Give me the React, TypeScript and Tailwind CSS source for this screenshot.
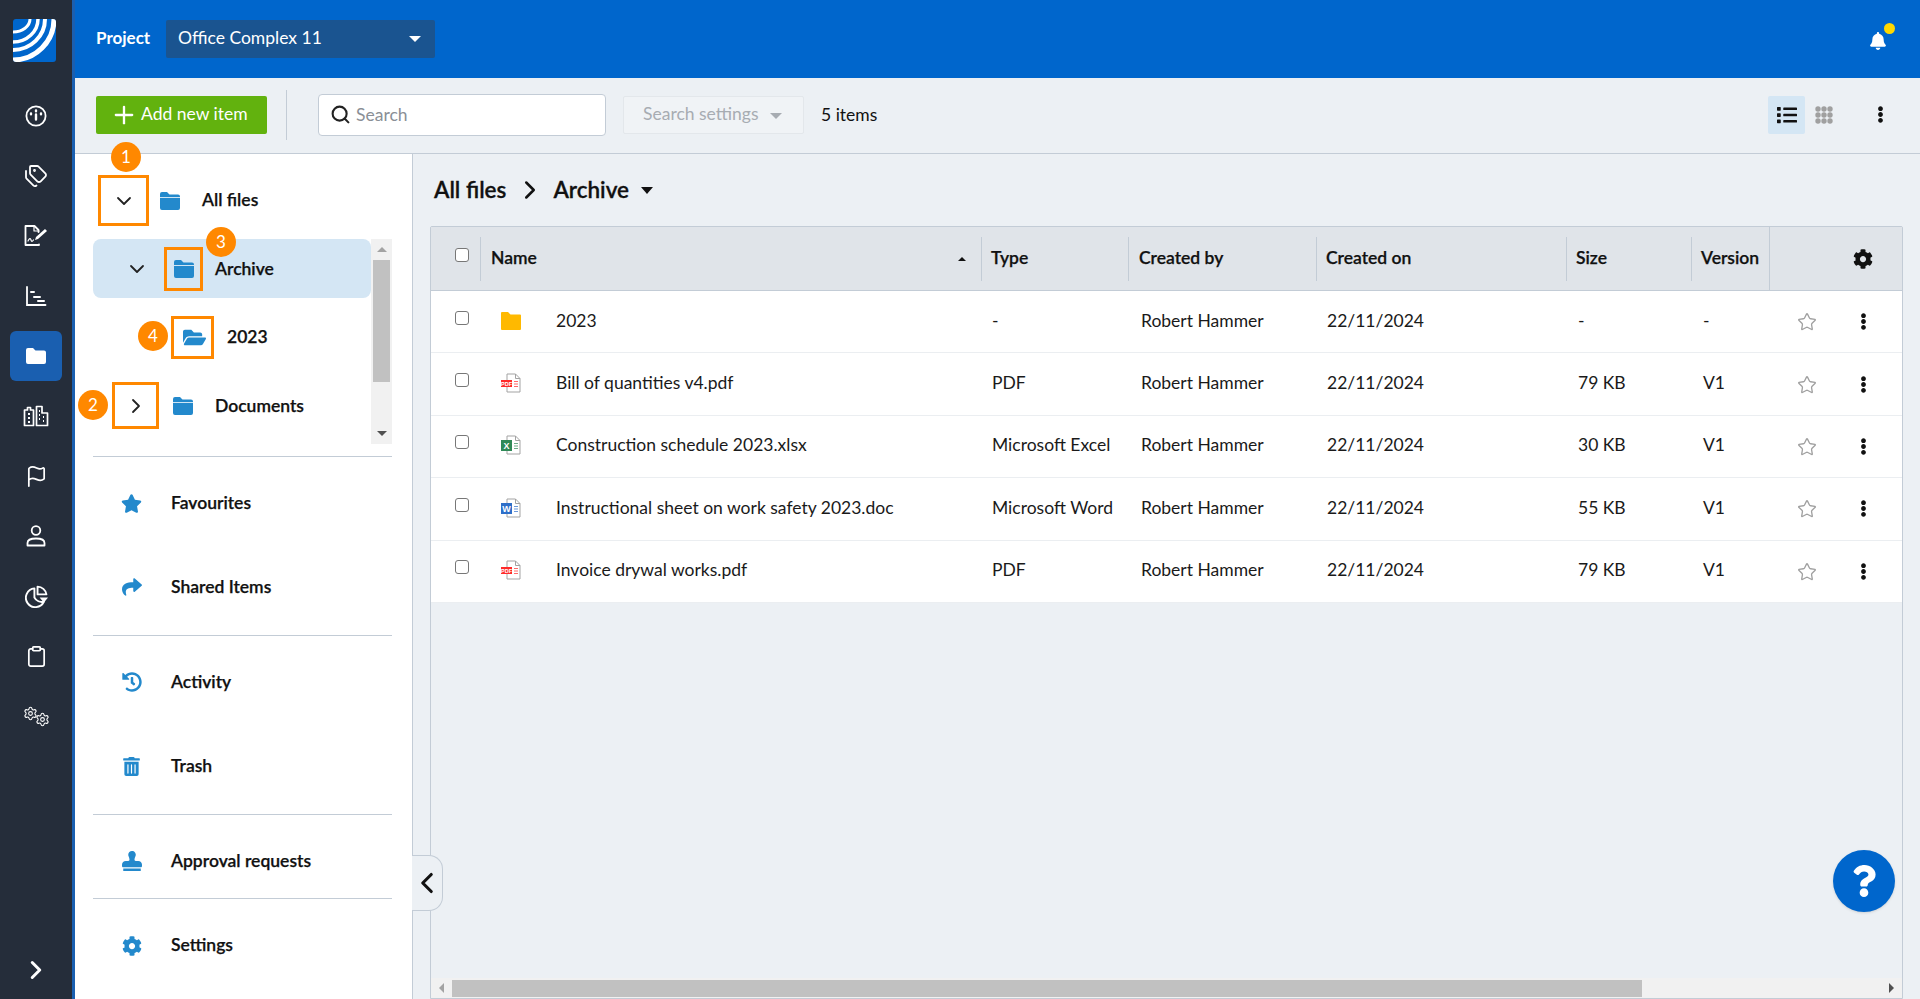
import { ChevronDown, ChevronLeft, ChevronRight, Clipboard, Flag, Plus, Search, Settings, Star, Tags } from 'lucide-react';
import { FaBell, FaCog, FaEllipsisV, FaFolderOpen, FaHistory, FaList, FaQuestion, FaShare, FaStamp, FaStar, FaTrashAlt } from 'react-icons/fa';
import type { ReactNode } from 'react';

const files = [
  { name: '2023', icon: 'folder', type: '-', size: '-', version: '-' },
  { name: 'Bill of quantities v4.pdf', icon: 'pdf', type: 'PDF', size: '79 KB', version: 'V1' },
  { name: 'Construction schedule 2023.xlsx', icon: 'xls', type: 'Microsoft Excel', size: '30 KB', version: 'V1' },
  { name: 'Instructional sheet on work safety 2023.doc', icon: 'doc', type: 'Microsoft Word', size: '55 KB', version: 'V1' },
  { name: 'Invoice drywal works.pdf', icon: 'pdf', type: 'PDF', size: '79 KB', version: 'V1' },
];

const gridCols = 'grid grid-cols-[50px_501px_147px_188px_250px_125px_78px_132px]';
const strong = 'text-[17.500px] font-semibold text-[#111] [-webkit-text-stroke:0.25px_#111]';

function Logo() {
  return (
    <svg viewBox="0 0 43 43" className="w-[43px] h-[43px]">
      <defs>
        <clipPath id="logo-clip">
          <rect width="43" height="43" rx="3" />
        </clipPath>
      </defs>
      <g clipPath="url(#logo-clip)" fill="none" stroke="#fff">
        <rect width="43" height="43" fill="#0066cc" stroke="none" />
        <ellipse cx="0" cy="0" rx="41" ry="41" strokeWidth="5" />
        <ellipse cx="0" cy="0" rx="32" ry="31" strokeWidth="4" />
        <ellipse cx="0" cy="0" rx="25" ry="23" strokeWidth="3.5" />
        <ellipse cx="0" cy="0" rx="17" ry="13" strokeWidth="3" />
      </g>
    </svg>
  );
}

function Gauge() {
  return (
    <svg viewBox="0 0 22 22" className="w-[22px] h-[22px]" fill="none" stroke="#fff" strokeWidth="1.8" strokeLinecap="round">
      <circle cx="11" cy="11" r="9.6" />
      <path d="M11 5.500v.8M6 8.500v.8M16 8.500v.8M11 9.500v5" strokeWidth="2.4" />
    </svg>
  );
}

function Signature() {
  return (
    <svg viewBox="0 0 24 22" className="w-[24px] h-[22px]" fill="none" stroke="#fff" strokeWidth="1.8" strokeLinejoin="round" strokeLinecap="round">
      <path d="M15 19.500v.5H1.500V1h9l4 4v2" />
      <path d="M10 1v5h5" strokeWidth="1.200" />
      <path d="M4 16c1.500-3 2.500-3 3-1s1.500 1.500 2.500 0" strokeWidth="1.200" />
      <path d="M11 15l1-3 9-8 2 2-9 8z" fill="#fff" stroke="none" />
    </svg>
  );
}

function Gantt() {
  return (
    <svg viewBox="0 0 22 22" className="w-[22px] h-[22px]" fill="none" stroke="#fff" strokeWidth="1.800" strokeLinecap="round">
      <path d="M2 2v18h18.500" />
      <path d="M6 7h3M9 12h6M13 16h6" strokeWidth="2" />
    </svg>
  );
}

function Buildings() {
  return (
    <svg viewBox="0 0 26 22" className="w-[26px] h-[22px]" fill="none" stroke="#fff" strokeWidth="1.700" strokeLinejoin="round">
      <path d="M1.500 20.500V5h3V2.500h3V5h3v15.500zM13.500 20.500V1.500H19V8h5.500v12.500z" />
      <path d="M5 9h2M5 13h2M5 17h2M16 6h1M16 10h1M16 14h1M20 12h1M20 16h1" strokeWidth="2" />
    </svg>
  );
}

function Pie() {
  return (
    <svg viewBox="0 0 22 22" className="w-[23px] h-[23px]" fill="none" stroke="#fff" strokeWidth="1.800" strokeLinejoin="round">
      <path d="M9 3.200a9 9 0 1 0 9 12.800a8 8 0 0 1-9-4z" />
      <path d="M12 1.500a9 9 0 0 1 8.500 7.500H12z" />
      <path d="M14 12h8l-4 5z" fill="#fff" stroke="none" />
    </svg>
  );
}

function Person() {
  return (
    <svg viewBox="0 0 20 22" className="w-[20px] h-[22px]" fill="none" stroke="#fff" strokeWidth="1.800" strokeLinejoin="round">
      <circle cx="10" cy="5.500" r="4.300" />
      <path d="M1.500 20.500v-2.500c0-2.500 3-4.500 8.500-4.500s8.500 2 8.500 4.500v2.500z" />
    </svg>
  );
}

function Cogs() {
  return (
    <div className="relative w-[27px] h-[21px] text-white">
      <Settings size={15} strokeWidth={1.7} className="absolute left-0 top-0" />
      <Settings size={15} strokeWidth={1.7} className="absolute right-0 bottom-0" />
    </div>
  );
}

function Rail() {
  const item = 'h-[60px] flex items-center justify-center';
  return (
    <aside className="w-[75px] shrink-0 bg-[#252d3a] border-r-[3px] border-[#1a5fb0] flex flex-col">
      <div className="h-[86px] pt-[19px] pl-[13px]">
        <Logo />
      </div>
      <div className={item}><Gauge /></div>
      <div className={item}><Tags size={24} strokeWidth={1.8} className="text-white" /></div>
      <div className={item}><Signature /></div>
      <div className={item}><Gantt /></div>
      <div className={item}>
        <div className="w-[52px] h-[50px] rounded-[6px] bg-[#1a5fb0] flex items-center justify-center">
          <svg viewBox="0 0 20 18" className="w-[20px] h-[18px]" fill="#fff">
            <path d="M0 3a2 2 0 0 1 2-2h5l2.500 2.500H18a2 2 0 0 1 2 2V15a2 2 0 0 1-2 2H2a2 2 0 0 1-2-2z" />
          </svg>
        </div>
      </div>
      <div className={item}><Buildings /></div>
      <div className={item}><Flag size={23} strokeWidth={1.8} className="text-white" /></div>
      <div className={item}><Person /></div>
      <div className={item}><Pie /></div>
      <div className={item}><Clipboard size={23} strokeWidth={1.8} className="text-white" /></div>
      <div className={item}><Cogs /></div>
      <div className="mt-auto h-[58px] flex items-center justify-center">
        <ChevronRight size={30} strokeWidth={2.4} className="text-white" />
      </div>
    </aside>
  );
}

function Folder({ className = '' }: { className?: string }) {
  return (
    <svg viewBox="0 0 20 18" className={'w-[20px] h-[18px] ' + className}>
      <path fill="#2389cc" d="M0 2a2 2 0 0 1 2-2h5l2.500 2.500H18a2 2 0 0 1 2 2V16a2 2 0 0 1-2 2H2a2 2 0 0 1-2-2z" />
      <path stroke="#cfe5f4" strokeWidth="1" d="M0 5.500h20" />
    </svg>
  );
}

function Badge({ n, className }: { n: number; className: string }) {
  return (
    <div className={'absolute z-10 w-[30px] h-[30px] rounded-full bg-[#ff8800] text-white text-[17px] leading-[30px] text-center ' + className}>
      {n}
    </div>
  );
}

function NavRow({ icon, label, className = 'h-[84px]' }: { icon: ReactNode; label: string; className?: string }) {
  return (
    <div className={'flex items-center pl-[28px] ' + className}>
      <div className="w-[21px] flex justify-center text-[#2389cc]">{icon}</div>
      <span className={'ml-[29px] ' + strong}>{label}</span>
    </div>
  );
}

function Tree() {
  return (
    <div className="w-[338px] shrink-0 bg-white flex flex-col border-r border-[#c3ccd6]">
      <div className="relative flex items-center ml-[23px] mt-[21px] h-[51px]">
        <div className="w-[51px] h-[51px] border-[3.5px] border-[#ff8800] flex items-center justify-center">
          <ChevronDown size={24} strokeWidth={1.8} className="text-[#222]" />
        </div>
        <Folder className="ml-[11px]" />
        <span className={'ml-[22px] ' + strong}>All files</span>
        <Badge n={1} className="left-[13px] -top-[33px]" />
      </div>
      <div className="ml-[18px] mt-[13px] w-[299px] h-[205px] flex">
        <div className="w-[278px] relative">
          <div className="relative h-[59px] bg-[#d4e6f4] rounded-[8px] flex items-center">
            <ChevronDown size={24} strokeWidth={1.8} className="ml-[32px] text-[#222]" />
            <div className="ml-[15px] w-[39px] h-[44px] mt-[1px] border-[3.500px] border-[#ff8800] flex items-center justify-center">
              <Folder />
            </div>
            <span className={'ml-[12px] mt-[1px] ' + strong}>Archive</span>
            <Badge n={3} className="left-[113px] -top-[12px]" />
          </div>
          <div className="relative h-[68px] mt-[5px] flex items-center">
            <div className="ml-[78px] w-[43px] h-[43px] border-[3.500px] border-[#ff8800] flex items-center justify-center">
              <FaFolderOpen size={23} className="ml-[4px] shrink-0 text-[#2389cc]" />
            </div>
            <span className={'ml-[13px] mt-[1px] ' + strong}>2023</span>
            <Badge n={4} className="left-[45px] top-[18px]" />
          </div>
          <div className="relative h-[68px] flex items-center">
            <div className="ml-[19px] w-[47px] h-[47px] mt-[1px] border-[3.500px] border-[#ff8800] flex items-center justify-center">
              <ChevronRight size={24} strokeWidth={1.8} className="ml-[1px] text-[#222]" />
            </div>
            <Folder className="ml-[14px] mt-[1px]" />
            <span className={'ml-[22px] mt-[2px] ' + strong}>Documents</span>
            <Badge n={2} className="-left-[15px] top-[19px]" />
          </div>
        </div>
        <div className="w-[21px] bg-[#f1f1f1] flex flex-col items-center">
          <div className="h-[21px] flex items-center">
            <div className="w-0 h-0 border-x-[5px] border-x-transparent border-b-[5px] border-b-[#a3a3a3]" />
          </div>
          <div className="w-[17px] h-[122px] bg-[#c1c1c1]" />
          <div className="mt-auto h-[21px] flex items-center">
            <div className="w-0 h-0 border-x-[5px] border-x-transparent border-t-[5px] border-t-[#505050]" />
          </div>
        </div>
      </div>
      <div className="ml-[18px] w-[299px] mt-[12px] border-t border-[#c3ccd6] pt-[4px] pb-[6px]">
        <NavRow icon={<FaStar size={21} />} label="Favourites" />
        <NavRow icon={<FaShare size={20} />} label="Shared Items" />
      </div>
      <div className="ml-[18px] w-[299px] border-t border-[#c3ccd6] pt-[4px] pb-[6px]">
        <NavRow icon={<FaHistory size={20} />} label="Activity" />
        <NavRow icon={<FaTrashAlt size={19} />} label="Trash" />
      </div>
      <div className="ml-[18px] w-[299px] border-t border-[#c3ccd6] pt-[9px]">
        <NavRow icon={<FaStamp size={20} />} label="Approval requests" className="h-[74px]" />
      </div>
      <div className="ml-[18px] w-[299px] border-t border-[#c3ccd6]">
        <NavRow icon={<FaCog size={20} />} label="Settings" className="h-[93px]" />
      </div>
    </div>
  );
}

function FileIcon({ kind }: { kind: string }) {
  if (kind === 'folder') {
    return (
      <svg viewBox="0 0 20 18" className="w-[20px] h-[18px]">
        <path fill="#ffb900" d="M0 1a1 1 0 0 1 1-1h6l2.500 2.500H19a1 1 0 0 1 1 1V17a1 1 0 0 1-1 1H1a1 1 0 0 1-1-1z" />
      </svg>
    );
  }
  const tone = kind === 'pdf' ? '#ff2a2a' : kind === 'xls' ? '#2f8a57' : '#2e6fc9';
  const label = kind === 'pdf' ? 'PDF' : kind === 'xls' ? 'X' : 'W';
  return (
    <svg viewBox="0 0 20 20" className="w-[20px] h-[20px]">
      <path d="M6 1h8.500L19 5.500V19H6z" fill="#fff" stroke="#a3a3a3" strokeWidth="1" strokeLinejoin="round" />
      <path d="M14.500 1v4.500H19" fill="none" stroke="#a3a3a3" strokeWidth="1" />
      <path d="M13 8.500h4M13 11h4M13 13.500h4" stroke={tone} strokeWidth="1" opacity="0.7" />
      {kind === 'pdf' ? (
        <>
          <rect x="0" y="7" width="11" height="7" fill={tone} />
          <text x="5.500" y="12.600" fontSize="5.500" fontWeight="700" fill="#fff" textAnchor="middle" fontFamily="Liberation Sans, sans-serif">{label}</text>
        </>
      ) : (
        <>
          <rect x="0" y="5" width="11" height="11" fill={tone} />
          <text x="5.500" y="13.500" fontSize="9" fontWeight="700" fill="#fff" textAnchor="middle" fontFamily="Liberation Sans, sans-serif">{label}</text>
        </>
      )}
    </svg>
  );
}

function Check() {
  return <input type="checkbox" className="appearance-none w-[14px] h-[14px] bg-white border-[1.5px] border-[#777] rounded-[3px] block" />;
}

function HeadCell({ label, pad = 'pl-[9px]' }: { label: string; pad?: string }) {
  return (
    <div className={'flex items-center h-[44px] border-r border-[#c3ccd6] ' + strong + ' ' + pad}>
      {label}
    </div>
  );
}

function Table() {
  return (
    <div className="ml-[17px] mr-[17px] flex-1 flex flex-col border border-[#c3ccd6] rounded-t-[2px]">
      <div className={gridCols + ' h-[64px] bg-[#e0e4e9] border-b border-[#c3ccd6] items-center'}>
        <div className="h-[44px] border-r border-[#c3ccd6] pl-[24px] flex items-center">
          <div className="-mt-[7px]"><Check /></div>
        </div>
        <div className={'flex items-center h-[44px] border-r border-[#c3ccd6] pl-[10px] ' + strong}>
          Name
          <div className="ml-auto mr-[15px] w-0 h-0 border-x-[4px] border-x-transparent border-b-[4px] border-b-[#111]" />
        </div>
        <HeadCell label="Type" />
        <HeadCell label="Created by" pad="pl-[10px]" />
        <HeadCell label="Created on" />
        <HeadCell label="Size" />
        <div className={'h-[63px] flex items-center border-r border-[#c3ccd6] pl-[9px] ' + strong}>Version</div>
        <div className="flex justify-end pr-[29px] text-[#111]"><FaCog size={20} /></div>
      </div>
      {files.map((f) => (
        <div key={f.name} className={gridCols + ' h-[62.4px] pb-[2px] bg-white border-b border-[#ebeef1] items-center text-[17.500px] text-[#1a1a1a]'}>
          <div className="pl-[24px] -mt-[6px]"><Check /></div>
          <div className="flex items-center pl-[20px]">
            <div className="w-[20px] flex justify-center"><FileIcon kind={f.icon} /></div>
            <span className="ml-[35px]">{f.name}</span>
          </div>
          <div className="pl-[10px]">{f.type}</div>
          <div className="pl-[12px]">Robert Hammer</div>
          <div className="pl-[10px]">22/11/2024</div>
          <div className="pl-[11px]">{f.size}</div>
          <div className="pl-[11px]">{f.version}</div>
          <div className="flex items-center pl-[27px] pt-[3px]">
            <Star size={20} strokeWidth={1.6} className="text-[#a0a0a0]" />
            <FaEllipsisV size={17} className="ml-[38px] -mt-[1px] text-[#111]" />
          </div>
        </div>
      ))}
      <div className="flex-1" />
      <div className="h-[20px] bg-[#f1f1f1] flex items-center">
        <div className="w-[21px] flex justify-center">
          <div className="w-0 h-0 border-y-[5px] border-y-transparent border-r-[5px] border-r-[#a3a3a3]" />
        </div>
        <div className="w-[1190px] h-[17px] bg-[#c1c1c1]" />
        <div className="ml-auto w-[21px] flex justify-center">
          <div className="w-0 h-0 border-y-[5px] border-y-transparent border-l-[5px] border-l-[#505050]" />
        </div>
      </div>
    </div>
  );
}

export default function App() {
  return (
    <div className="h-screen w-full flex overflow-hidden bg-[#ecf0f4] font-['Lato',sans-serif] text-[#111]">
      <Rail />
      <div className="flex-1 flex flex-col min-w-0">
        <header className="h-[78px] shrink-0 bg-[#0066cc] flex items-center pl-[21px] pr-[33px]">
          <span className="text-[17px] font-bold text-white w-[70px] -mt-[2px]">Project</span>
          <div className="w-[269px] h-[38px] rounded-[2px] bg-[#1a5490] flex items-center pl-[12px] pr-[14px] text-[17.500px] text-white">
            <span className="-mt-[2px]">Office Complex 11</span>
            <div className="ml-auto w-0 h-0 border-x-[6px] border-x-transparent border-t-[6px] border-t-white" />
          </div>
          <div className="relative ml-auto -mt-[2px]">
            <FaBell size={18} className="text-white mt-[6px]" />
            <div className="absolute -right-[8px] -top-[3px] w-[11px] h-[11px] rounded-full bg-[#ffd800]" />
          </div>
        </header>
        <div className="h-[76px] shrink-0 pb-[2px] border-b border-[#c3ccd6] flex items-center pl-[21px] pr-[31px]">
          <button className="w-[171px] h-[38px] rounded-[2px] bg-[#62b20e] text-white text-[17.500px] flex items-center pl-[14px] gap-[3px]">
            <Plus size={28} strokeWidth={2} />
            Add new item
          </button>
          <div className="ml-[19px] w-px h-[50px] bg-[#c3ccd6]" />
          <div className="ml-[31px] w-[288px] h-[42px] bg-white border border-[#c3ccd6] rounded-[4px] flex items-center pl-[11px] text-[17.500px] text-[#8a8f96]">
            <Search size={21} strokeWidth={2.4} className="text-[#222]" />
            <span className="ml-[5px] mt-[1px]">Search</span>
          </div>
          <div className="ml-[17px] w-[181px] h-[38px] bg-[#f0f3f6] border border-[#e3e7eb] rounded-[2px] flex items-center pl-[19px] text-[17.500px] text-[#a7acb2]">
            Search settings
            <div className="ml-[12px] mt-[2px] w-0 h-0 border-x-[6px] border-x-transparent border-t-[6px] border-t-[#a7acb2]" />
          </div>
          <span className="ml-[17px] mt-[1px] text-[17.500px] text-[#111]">5 items</span>
          <div className="ml-auto w-[37px] h-[38px] rounded-[2px] bg-[#d4e6f4] flex items-center justify-center">
            <FaList size={20} className="text-[#111]" />
          </div>
          <svg viewBox="0 0 18 18" className="ml-[10px] w-[18px] h-[18px]" fill="#a0a0a0">
            <circle cx="3" cy="3" r="2.700" /><circle cx="9" cy="3" r="2.700" /><circle cx="15" cy="3" r="2.700" />
            <circle cx="3" cy="9" r="2.700" /><circle cx="9" cy="9" r="2.700" /><circle cx="15" cy="9" r="2.700" />
            <circle cx="3" cy="15" r="2.700" /><circle cx="9" cy="15" r="2.700" /><circle cx="15" cy="15" r="2.700" />
          </svg>
          <FaEllipsisV size={17} className="ml-[39px] text-[#111]" />
        </div>
        <div className="flex-1 flex min-h-0">
          <Tree />
          <main className="relative flex-1 flex flex-col min-w-0">
            <div className="h-[72px] shrink-0 pl-[21px] flex items-center text-[22.500px] font-semibold text-[#111] [-webkit-text-stroke:0.3px_#111]">
              All files
              <ChevronRight size={30} strokeWidth={2} className="ml-[9px]" />
              <span className="ml-[8px]">Archive</span>
              <div className="ml-[12px] w-0 h-0 border-x-[6px] border-x-transparent border-t-[7px] border-t-[#111]" />
            </div>
            <Table />
            <div className="absolute -left-px top-[701px] w-[31px] h-[56px] rounded-r-[14px] bg-[#ecf0f4] border border-l-0 border-[#c3ccd6] flex items-center">
              <ChevronLeft size={34} strokeWidth={2.2} className="-ml-[2px] shrink-0 text-[#111]" />
            </div>
            <div className="absolute right-[25px] top-[696px] w-[62px] h-[62px] rounded-full bg-[#0066cc] shadow flex items-center justify-center">
              <FaQuestion size={32} className="text-white" />
            </div>
          </main>
        </div>
      </div>
    </div>
  );
}
